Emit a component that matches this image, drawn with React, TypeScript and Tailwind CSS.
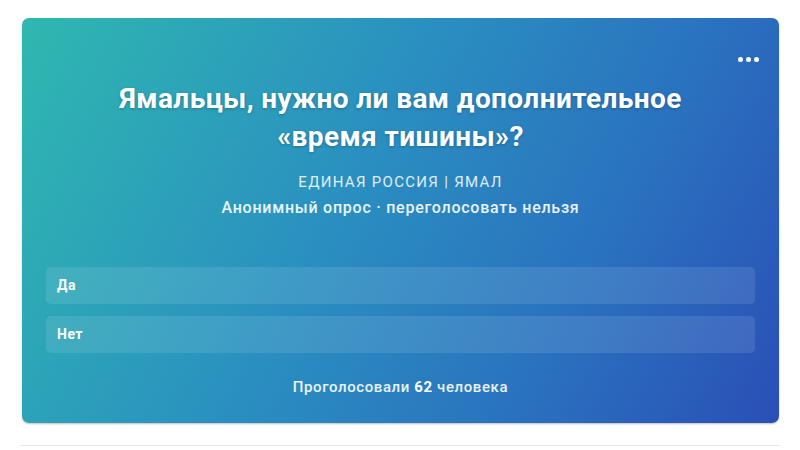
const options = ['Да', 'Нет']

const App = () => {
    return (
        <div className="min-h-[450px] w-[800px] bg-white px-[22px] pt-[18px] font-['Roboto',sans-serif]">
            <section className="relative h-[405px] w-[757px] rounded-[7px] bg-[linear-gradient(118deg,#2fb8b0_0%,#2a90c0_42%,#2a72bf_72%,#2a4fb6_100%)] px-[24px] pt-[62px] text-white shadow-[0_1px_2px_rgba(0,0,0,0.25)]">
                <button type="button" className="absolute right-[20px] top-[39px] flex items-center gap-[3px]">
                    <span className="h-[5px] w-[5px] rounded-full bg-white" />
                    <span className="h-[5px] w-[5px] rounded-full bg-white" />
                    <span className="h-[5px] w-[5px] rounded-full bg-white" />
                </button>

                <h1 className="text-center text-[28px] font-bold leading-[38px] tracking-[0.4px] [text-shadow:0_1px_3px_rgba(0,0,0,0.25)]">
                    Ямальцы, нужно ли вам дополнительное
                    <br />
                    «время тишины»?
                </h1>

                <div className="mt-[13px] text-center">
                    <p className="text-[15px] leading-[26px] tracking-[1.3px] text-white/85">ЕДИНАЯ РОССИЯ | ЯМАЛ</p>
                    <p className="text-[16px] font-medium leading-[26px] tracking-[0.75px] text-white/90">Анонимный опрос · переголосовать нельзя</p>
                </div>

                <div className="mt-[46px] flex flex-col gap-[12px]">
                    {options.map((option) => (
                        <div key={option} className="flex h-[37px] items-center rounded-[5px] bg-white/10 px-[11px] text-[14px] font-bold tracking-[0.5px]">
                            {option}
                        </div>
                    ))}
                </div>

                <p className="mt-[24px] text-center text-[15px] font-medium leading-[20px] tracking-[0.6px] text-white/90">
                    Проголосовали <span className="font-bold text-white">62</span> человека
                </p>
            </section>
            <div className="mt-[22px] -ml-[2px] h-px w-[760px] bg-[#e6e8eb]" />
        </div>
    )
}

export default App
